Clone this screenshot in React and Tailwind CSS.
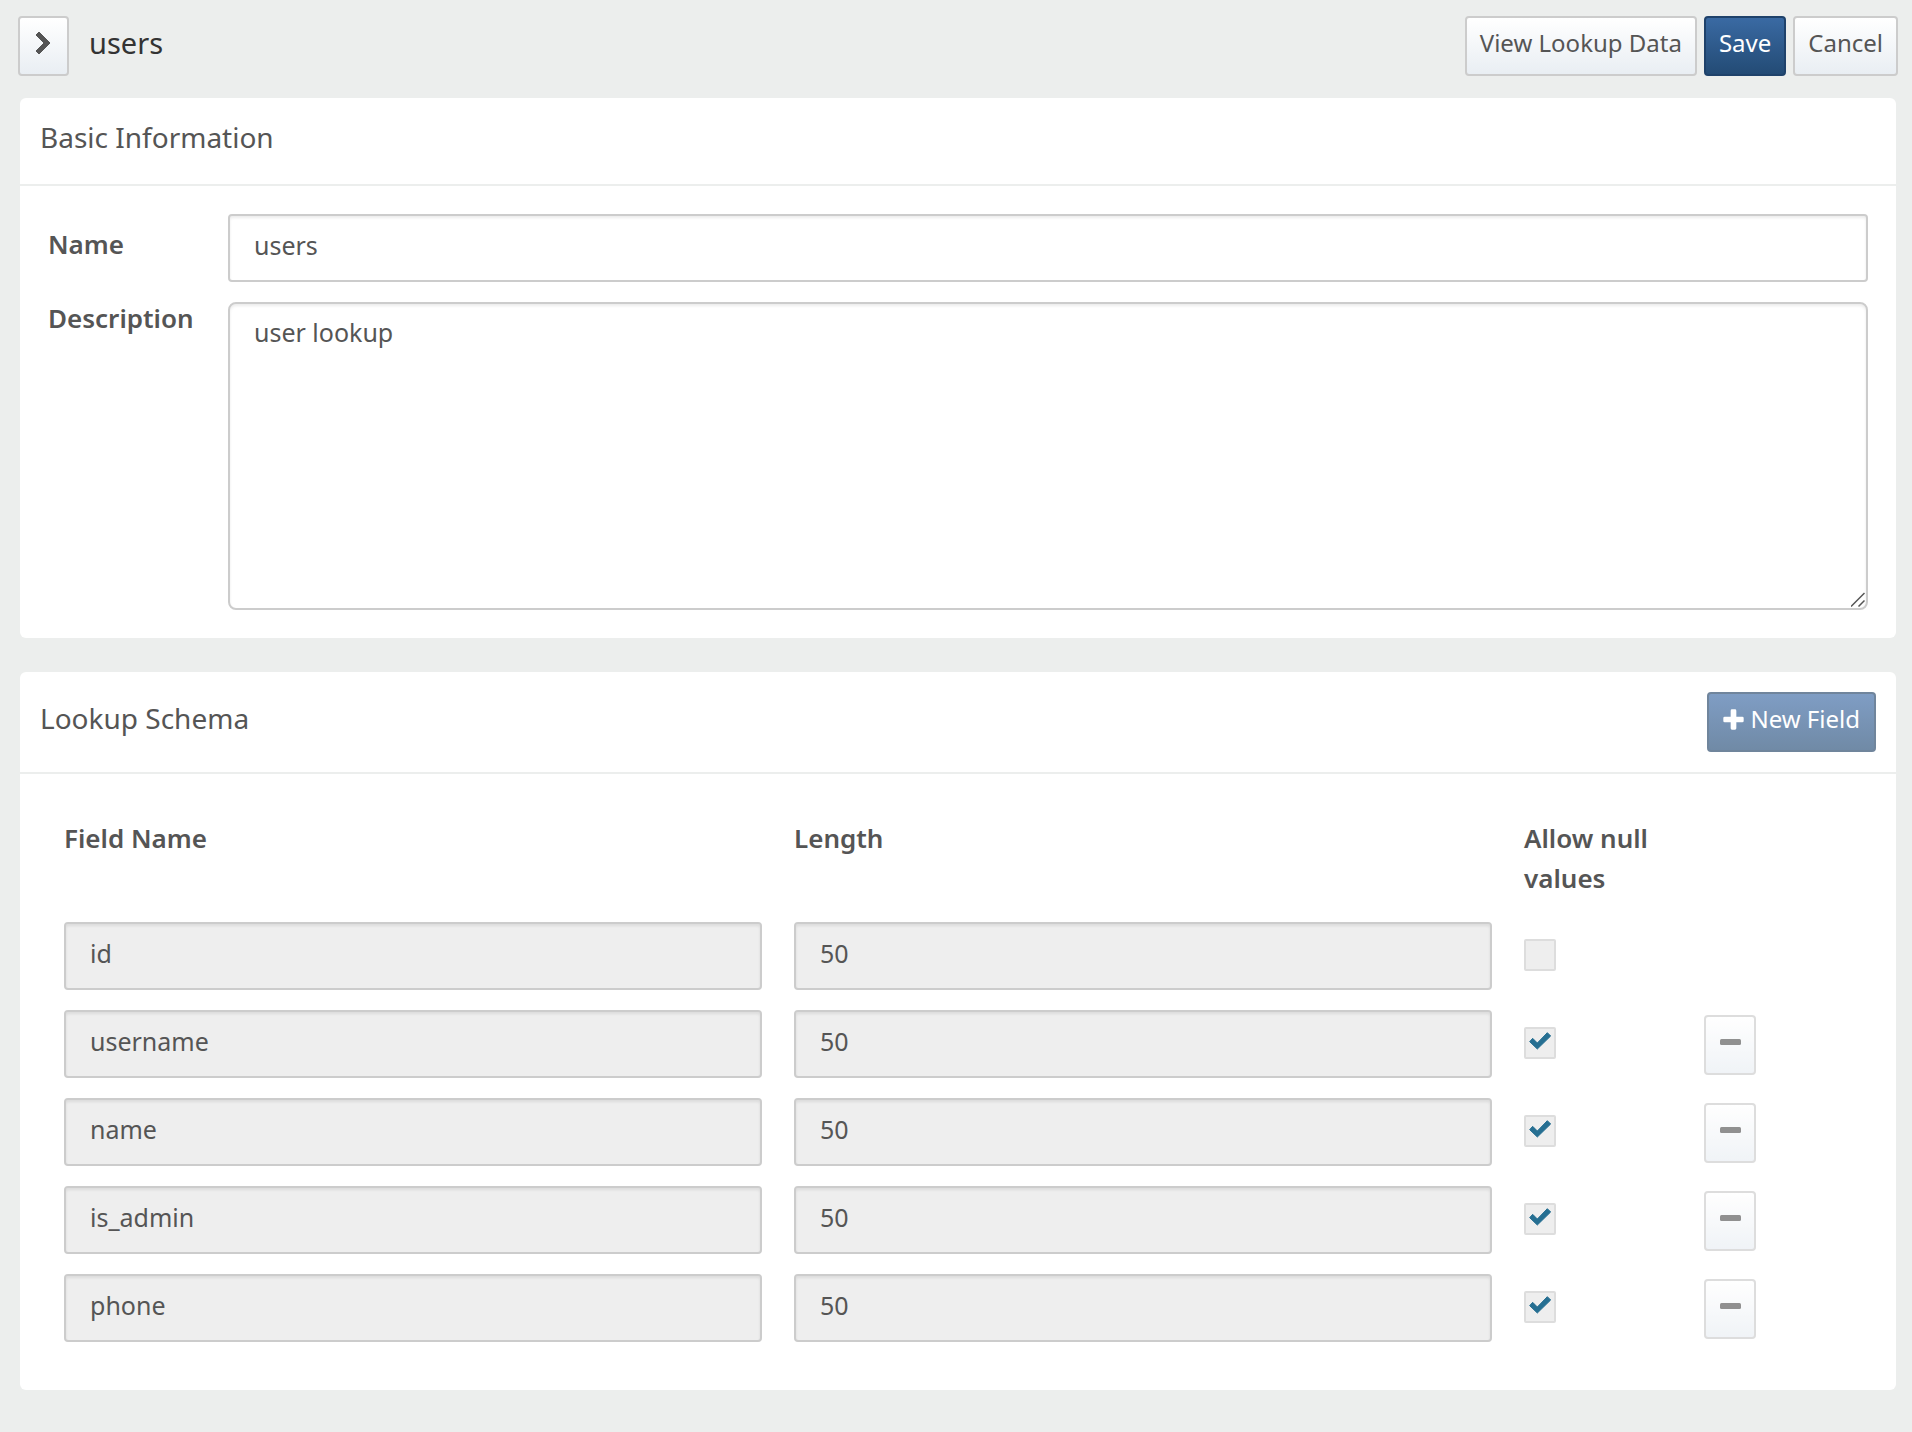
import React from "react";

const fields = [
  { name: "id", length: 50, nullable: false, removable: false },
  { name: "username", length: 50, nullable: true, removable: true },
  { name: "name", length: 50, nullable: true, removable: true },
  { name: "is_admin", length: 50, nullable: true, removable: true },
  { name: "phone", length: 50, nullable: true, removable: true },
];

const buttonBase =
  "flex h-[60px] items-center justify-center rounded border-2 pb-1.5 text-2xl";
const lightButton =
  "border-[#cccccc] bg-linear-to-b from-white to-[#e9eef3] text-[#555555]";
const inputBase =
  "block w-full border-2 border-[#cccccc] px-6 text-[25px] text-[#555555] shadow-[inset_0_2px_3px_rgba(0,0,0,0.08)] outline-none";

function ChevronIcon() {
  return (
    <svg viewBox="0 0 54 72" className="h-6 w-[18px]" fill="#555555" stroke="#555555" strokeWidth="3" strokeLinejoin="round" aria-hidden="true">
      <path d="M3 12 L12 3 L45 36 L12 69 L3 60 L27 36 Z" />
    </svg>
  );
}

function PlusIcon() {
  return (
    <svg viewBox="0 0 63 63" className="size-[21px]" fill="currentColor" aria-hidden="true">
      <path d="M27 1h9a4 4 0 0 1 4 4v18h18a4 4 0 0 1 4 4v9a4 4 0 0 1-4 4H40v18a4 4 0 0 1-4 4h-9a4 4 0 0 1-4-4V40H5a4 4 0 0 1-4-4v-9a4 4 0 0 1 4-4h18V5a4 4 0 0 1 4-4z" />
    </svg>
  );
}

function MinusIcon() {
  return (
    <svg viewBox="0 0 42 12" className="h-[6px] w-[21px]" aria-hidden="true">
      <rect width="42" height="12" rx="3" fill="#555555" />
    </svg>
  );
}

function CheckIcon() {
  return (
    <svg viewBox="0 0 96 96" className="pointer-events-none col-start-1 row-start-1 size-8" fill="#266f92" stroke="#266f92" strokeWidth="3" strokeLinejoin="round" aria-hidden="true">
      <path d="M17 44 L26 34 L40 48 L70 17 L80 27 L40 66 Z" />
    </svg>
  );
}

function NullableBox({ field }) {
  return (
    <div className="mb-0.5 grid size-8">
      <input
        type="checkbox"
        aria-label={`Allow null values for ${field.name}`}
        defaultChecked={field.nullable}
        disabled
        className="col-start-1 row-start-1 size-8 appearance-none rounded-xs border-2 border-[#dddddd] bg-[#eeeeee]"
      />
      {field.nullable && <CheckIcon />}
    </div>
  );
}

export default function App() {
  return (
    <div className="min-h-screen bg-[#eceeed] pt-4 pr-4 pb-10 pl-5 font-['Noto_Sans',sans-serif] text-[#555555]">
      <header className="flex items-center justify-between">
        <div className="-ml-0.5 flex items-center gap-5">
          <button type="button" aria-label="Expand navigation" className={`${buttonBase} ${lightButton} w-[51px]`}>
            <ChevronIcon />
          </button>
          <h1 className="pb-1.5 text-[29px] leading-10 text-[#333333]">users</h1>
        </div>
        <div className="-mr-0.5 flex gap-[7px]">
          <button type="button" className={`${buttonBase} ${lightButton} px-[13px]`}>View Lookup Data</button>
          <button type="button" className={`${buttonBase} border-[#1f426b] bg-linear-to-b from-[#3a6aa3] to-[#234b75] px-[13px] text-white`}>Save</button>
          <button type="button" className={`${buttonBase} ${lightButton} px-[13px]`}>Cancel</button>
        </div>
      </header>

      <main className="mt-[22px] flex flex-col gap-[34px]">
        <section className="rounded-md bg-white">
          <div className="flex h-[88px] items-center border-b-2 border-[#eceeed] px-5 pb-2">
            <h2 className="text-[28px] leading-10">Basic Information</h2>
          </div>
          <form className="grid grid-cols-[180px_1fr] gap-y-5 p-7">
            <label htmlFor="name" className="pt-2.5 text-[26px] leading-10 font-semibold">Name</label>
            <input id="name" defaultValue="users" className={`${inputBase} h-[68px] rounded bg-white pb-1.5`} />
            <label htmlFor="description" className="text-[26px] leading-8 font-semibold">Description</label>
            <div className="relative">
              <textarea id="description" defaultValue="user lookup" className={`${inputBase} h-[308px] resize-none rounded-lg bg-white pt-2 leading-10`} />
              <svg viewBox="0 0 14 15" className="pointer-events-none absolute right-[3px] bottom-[3px] h-[15px] w-3.5" fill="none" stroke="#555555" strokeWidth="1.500" aria-hidden="true">
                <path d="M0 14.500 L13.500 1 M7.500 14.500 L13.500 8.500" />
              </svg>
            </div>
          </form>
        </section>

        <section className="rounded-md bg-white">
          <div className="flex h-[102px] items-center justify-between border-b-2 border-[#eceeed] px-5">
            <h2 className="pb-2 text-[28px] leading-10">Lookup Schema</h2>
            <button type="button" disabled className={`${buttonBase} gap-1.5 border-[#70859c] bg-linear-to-b from-[#7f9dc4] to-[#708aa6] px-3.5 text-white`}>
              <PlusIcon />
              New Field
            </button>
          </div>
          <div className="px-7 pt-7 pb-[38px]">
            <table className="w-full table-fixed border-collapse">
              <colgroup>
                <col />
                <col />
                <col className="w-[180px]" />
                <col className="w-[180px]" />
              </colgroup>
              <thead>
                <tr className="text-left align-top text-[26px] leading-10">
                  <th className="px-4 pt-4 pb-3.5 font-semibold">Field Name</th>
                  <th className="px-4 pt-4 pb-3.5 font-semibold">Length</th>
                  <th className="px-4 pt-4 pb-3.5 font-semibold">Allow null values</th>
                  <td />
                </tr>
              </thead>
              <tbody>
                {fields.map((field) => (
                  <tr key={field.name}>
                    <td className="px-4 py-2.5">
                      <input aria-label="Field Name" defaultValue={field.name} disabled className={`${inputBase} h-[68px] rounded bg-[#eeeeee] pb-1.5`} />
                    </td>
                    <td className="px-4 py-2.5">
                      <input aria-label={`Length of ${field.name}`} defaultValue={field.length} disabled className={`${inputBase} h-[68px] rounded bg-[#eeeeee] pb-1.5`} />
                    </td>
                    <td className="px-4">
                      <NullableBox field={field} />
                    </td>
                    <td className="px-4 pt-0.5">
                      {field.removable && (
                        <button type="button" disabled aria-label={`Remove ${field.name}`} className={`${buttonBase} ${lightButton} w-[52px] opacity-65`}>
                          <MinusIcon />
                        </button>
                      )}
                    </td>
                  </tr>
                ))}
              </tbody>
            </table>
          </div>
        </section>
      </main>
    </div>
  );
}
